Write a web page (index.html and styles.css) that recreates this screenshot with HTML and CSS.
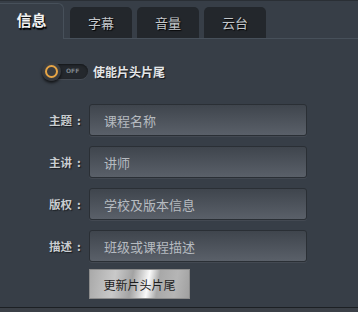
FILE: index.html
```html
<!DOCTYPE html>
<html lang="zh">
<head>
<meta charset="utf-8">
<title>信息</title>
<link rel="stylesheet" href="styles.css">
</head>
<body>
<div class="panel">
  <div class="tabs">
    <div class="tab active">信息</div>
    <div class="tab first">字幕</div>
    <div class="tab">音量</div>
    <div class="tab">云台</div>
  </div>
  <div class="content">
    <div class="toggle-row">
      <div class="toggle">
        <span class="knob"><span class="ring"></span></span>
        <span class="off">OFF</span>
      </div>
      <span class="toggle-label">使能片头片尾</span>
    </div>
    <div class="form">
      <div class="row">
        <span class="label">主题<span class="colon">:</span></span>
        <div class="input">课程名称</div>
      </div>
      <div class="row">
        <span class="label">主讲<span class="colon">:</span></span>
        <div class="input">讲师</div>
      </div>
      <div class="row">
        <span class="label">版权<span class="colon">:</span></span>
        <div class="input">学校及版本信息</div>
      </div>
      <div class="row">
        <span class="label">描述<span class="colon">:</span></span>
        <div class="input">班级或课程描述</div>
      </div>
      <div class="row btn-row">
        <span class="label"></span>
        <div class="button">更新片头片尾</div>
      </div>
    </div>
  </div>
</div>
</body>
</html>
```

FILE: styles.css
```css
html, body {
  margin: 0;
  padding: 0;
}
body {
  width: 358px;
  height: 312px;
  background: #3b4047;
  font-family: "Noto Sans CJK SC", "Noto Sans", sans-serif;
  overflow: hidden;
}
.panel {
  height: 308px;
  box-sizing: border-box;
  background: #373e47;
  border-bottom: 1px solid #1c2024;
  border-top: 1px solid #2a2f35;
}
.tabs {
  display: flex;
  align-items: flex-end;
  height: 37px;
  border-bottom: 1px solid #47505a;
  box-sizing: content-box;
}
.tab {
  width: 62px;
  height: 31px;
  margin-left: 5px;
  background: #23272c;
  border-radius: 5px 5px 0 0;
  color: #c3c7cb;
  font-size: 13px;
  display: flex;
  align-items: center;
  justify-content: center;
  text-shadow: 1px 1px 1px #000;
  margin-bottom: 0;
}
.tab.first {
  margin-left: 6px;
}
.tab.active {
  width: 64px;
  height: 36px;
  margin-left: 0;
  margin-bottom: -1px;
  background: #373e47;
  border: 1px solid #47505a;
  border-left: none;
  border-bottom: none;
  border-radius: 0 6px 0 0;
  box-sizing: border-box;
  color: #f2f2f2;
  font-size: 15px;
  font-weight: bold;
  padding-bottom: 4px;
  text-shadow: 1px 2px 1px #000;
}
.content {
  padding: 23px 0 0 43px;
}
.toggle-row {
  display: flex;
  align-items: center;
  height: 18px;
}
.toggle {
  position: relative;
  width: 44px;
  height: 15px;
  margin-left: 1px;
  background: #24282d;
  border-radius: 8px;
  box-shadow: inset 0 1px 2px #15181b, 0 1px 0 #454b53;
}
.knob {
  position: absolute;
  left: -2px;
  top: -2px;
  width: 19px;
  height: 19px;
  border-radius: 50%;
  background: radial-gradient(circle at 50% 40%, #4a4d52, #2b2e32);
  box-shadow: 0 2px 3px rgba(0,0,0,0.7);
  display: flex;
  align-items: center;
  justify-content: center;
}
.ring {
  width: 9px;
  height: 9px;
  border-radius: 50%;
  border: 2px solid #e7a545;
  background: #393c40;
}
.off {
  position: absolute;
  left: 22px;
  top: 3px;
  font-family: "DejaVu Sans", sans-serif;
  font-size: 6px;
  font-weight: bold;
  color: #7d838a;
  line-height: 8px;
}
.toggle-label {
  margin-left: 5px;
  color: #e4e6e8;
  font-size: 12px;
  font-weight: bold;
  text-shadow: 1px 1px 1px #15181b;
}
.form {
  margin-top: 24px;
}
.row {
  display: flex;
  align-items: center;
  margin-bottom: 10px;
}
.label {
  width: 40px;
  margin-left: 6px;
  color: #c9cdd1;
  font-size: 11.5px;
  font-weight: bold;
  text-shadow: 1px 1px 1px #1a1d21;
  white-space: nowrap;
}
.colon {
  margin-left: 5px;
}
.input {
  width: 218px;
  height: 32px;
  box-sizing: border-box;
  border: 1px solid #2a2f35;
  border-radius: 3px;
  background: linear-gradient(to bottom, #3f454d, #5a6069);
  box-shadow: 0 1px 0 #434952;
  color: #b6bbc0;
  font-size: 13px;
  padding-left: 14px;
  display: flex;
  align-items: center;
}
.btn-row {
  margin-top: -3px;
}
.button {
  width: 101px;
  height: 30px;
  box-sizing: border-box;
  border: 1px solid #8c8c8c;
  background: linear-gradient(100deg, #a9a9a9 0%, #c9c9c9 25%, #a3a3a3 42%, #d8d8d8 52%, #fafafa 58%, #a8a8a8 68%, #b5b5b5 85%, #a0a0a0 100%);
  color: #1d1d1d;
  font-size: 12px;
  display: flex;
  align-items: center;
  justify-content: center;
}
```
